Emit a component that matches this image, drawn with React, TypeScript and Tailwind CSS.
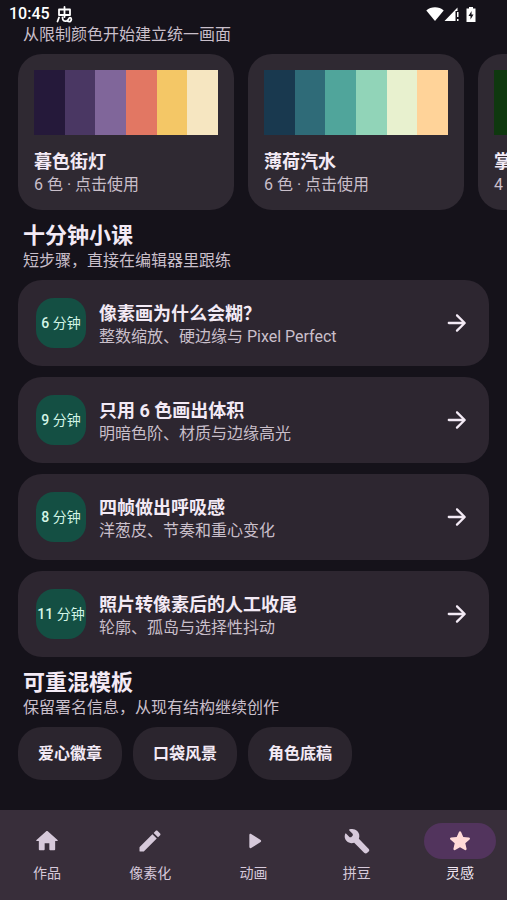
const palettes = [
    { name: '暮色街灯', colors: ['#25193a', '#4a3763', '#80669a', '#e27763', '#f4c766', '#f6e6c1'] },
    { name: '薄荷汽水', colors: ['#19394f', '#2f6b78', '#50a59b', '#91d4b8', '#e8f1cf', '#ffd399'] },
    { name: '掌机绿屏', colors: ['#0f380f', '#306230', '#8bac0f', '#9bbc0f'] },
]

const lessons = [
    { minutes: 6, title: '像素画为什么会糊？', text: '整数缩放、硬边缘与 Pixel Perfect' },
    { minutes: 9, title: '只用 6 色画出体积', text: '明暗色阶、材质与边缘高光' },
    { minutes: 8, title: '四帧做出呼吸感', text: '洋葱皮、节奏和重心变化' },
    { minutes: 11, title: '照片转像素后的人工收尾', text: '轮廓、孤岛与选择性抖动' },
]

const templates = ['爱心徽章', '口袋风景', '角色底稿']

const icons = {
    home: 'M10 19v-5h4v5c0 .55.45 1 1 1h3c.55 0 1-.45 1-1v-7h1.700c.46 0 .68-.57.33-.87L12.67 3.600c-.38-.34-.96-.34-1.340 0l-8.360 7.530c-.34.3-.13.87.33.87H5v7c0 .55.45 1 1 1h3c.55 0 1-.45 1-1z',
    edit: 'M3 17.46v3.04c0 .28.22.5.5.5h3.04c.13 0 .26-.05.35-.15L17.81 9.94l-3.75-3.75L3.15 17.1c-.1.1-.15.22-.15.36zM20.71 7.04c.39-.39.39-1.02 0-1.41l-2.34-2.34c-.39-.39-1.02-.39-1.41 0l-1.83 1.83 3.75 3.75 1.83-1.83z',
    play: 'M8 6.82v10.36c0 .79.87 1.27 1.54.84l8.14-5.18c.62-.39.62-1.29 0-1.69L9.54 5.98C8.87 5.55 8 6.03 8 6.82z',
    build: 'M21.9 18.6l-8.300-8.500c.85-2.300.4-4.900-1.400-6.600C10.500 1.700 7.900 1.200 5.700 2c-.5.2-.6.7-.25 1.050L8.400 6v1.300L7 8.700H5.700L2.800 5.800c-.35-.35-.85-.25-1 .2C1 8.100 1.500 10.500 3.100 12.100c1.750 1.750 4.300 2.200 6.500 1.400l8.500 8.500c.8.8 2 .8 2.700.1l1.200-1.100c.7-.7.7-1.700-.1-2.400z',
    star: 'M12 17.27l4.15 2.51c.76.46 1.69-.22 1.49-1.08l-1.1-4.72 3.67-3.18c.67-.58.31-1.68-.57-1.75l-4.83-.41-1.89-4.46c-.34-.81-1.5-.81-1.84 0L9.19 8.63l-4.83.41c-.88.07-1.24 1.17-.57 1.75l3.67 3.18-1.1 4.72c-.2.86.73 1.54 1.49 1.08L12 17.27z',
    arrow: 'M5 13h11.17l-4.88 4.88c-.39.39-.39 1.03 0 1.42.39.39 1.02.39 1.41 0l6.59-6.59c.39-.39.39-1.02 0-1.41l-6.58-6.6c-.39-.39-1.02-.39-1.41 0-.39.39-.39 1.02 0 1.41L16.17 11H5c-.55 0-1 .45-1 1s.45 1 1 1z',
}

const tabs = [
    { label: '作品', icon: icons.home },
    { label: '像素化', icon: icons.edit },
    { label: '动画', icon: icons.play },
    { label: '拼豆', icon: icons.build },
    { label: '灵感', icon: icons.star, active: true },
]

function Icon({ path }: { path: string }) {
    return (
        <svg className="size-7 shrink-0" viewBox="0 0 24 24" fill="currentColor" aria-hidden="true">
            <path d={path} />
        </svg>
    )
}

function StatusBar() {
    return (
        <header className="flex h-6 items-center px-[9px] pt-1 text-white">
            <span className="text-base font-medium leading-5">10:45</span>
            <svg className="ml-[6px] size-[17px]" viewBox="0 0 17 17" fill="none" stroke="currentColor" strokeWidth="1.800" strokeLinecap="round" strokeLinejoin="round" aria-hidden="true">
                <path d="M3 3.500h11v5.500H3zM8.500 1v10M3 11.500l-1.500 4M6.500 11.500c0 3.500 2 4.300 4.500 3.200 2-.9 1.500-3 3-3s1.800 2.500.5 3.500-2.500.2-3.500-.5" />
            </svg>
            <div className="ml-auto flex items-center pr-[22px]">
                <svg className="h-[14px] w-[18px]" viewBox="0 0 18 14" fill="currentColor" aria-hidden="true">
                    <path d="M9 14 .3 3.400C5 -.8 13 -.8 17.700 3.400z" />
                </svg>
                <svg className="h-[14px] w-4" viewBox="0 0 16 14" fill="currentColor" aria-hidden="true">
                    <path d="M.5 14 13.500.5V4H11.500v10zM13 5h1.500v5H13zM13 12h1.500v2H13z" />
                </svg>
                <svg className="ml-[6px] h-[15px] w-[10px]" viewBox="0 0 10 15" aria-hidden="true">
                    <path fill="currentColor" d="M3 0h4v1.500h2.500V15H.5V1.500H3z" />
                    <path fill="#15121a" d="M5.600 4 2.500 9h2v3.500l3-5h-2z" />
                </svg>
            </div>
        </header>
    )
}

function SectionTitle({ title, text }: { title: string; text: string }) {
    return (
        <div className="mt-3 px-[23px]">
            <h2 className="text-[22px] font-bold leading-7">{title}</h2>
            <p className="text-base leading-[22px] text-[#c9bfca]">{text}</p>
        </div>
    )
}

export default function App() {
    return (
        <div className="flex min-h-screen flex-col overflow-hidden bg-[#15121a] font-[Roboto,'Noto_Sans_CJK_SC',sans-serif] text-[#f3eaf5]">
            <StatusBar />
            <main className="flex-1 pb-[30px]">
                <p className="px-[23px] text-base leading-[22px] text-[#c9bfca]">从限制颜色开始建立统一画面</p>
                <div className="mt-2 flex gap-[14px] overflow-x-auto pl-[18px] [scrollbar-width:none]">
                    {palettes.map((palette) => (
                        <button key={palette.name} type="button" className="w-[216px] shrink-0 rounded-3xl bg-[#2f2932] p-4 pb-[14px] text-left">
                            <div className="flex h-[65px]">
                                {palette.colors.map((color) => (
                                    <span key={color} className="flex-1" style={{ backgroundColor: color }} />
                                ))}
                            </div>
                            <h3 className="mt-[15px] text-lg font-bold leading-6">{palette.name}</h3>
                            <p className="text-base leading-[22px] text-[#c9bfca]">{palette.colors.length} 色 · 点击使用</p>
                        </button>
                    ))}
                </div>

                <SectionTitle title="十分钟小课" text="短步骤，直接在编辑器里跟练" />
                <div className="mt-2 flex flex-col gap-[11px] px-[18px]">
                    {lessons.map((lesson) => (
                        <button key={lesson.title} type="button" className="flex h-[86px] items-center rounded-3xl bg-[#2d2630] px-[18px] text-left">
                            <span className="flex size-[50px] shrink-0 items-center justify-center whitespace-pre rounded-[18px] bg-[#144f43] text-sm text-[#d3f5e6]">
                                <span className="font-medium">{lesson.minutes}</span> 分钟
                            </span>
                            <span className="ml-[13px] flex-1 pt-1">
                                <span className="block text-lg font-bold leading-6">{lesson.title}</span>
                                <span className="block text-base leading-[22px] text-[#c9bfca]">{lesson.text}</span>
                            </span>
                            <Icon path={icons.arrow} />
                        </button>
                    ))}
                </div>

                <SectionTitle title="可重混模板" text="保留署名信息，从现有结构继续创作" />
                <div className="mt-2 flex gap-[11px] px-[18px]">
                    {templates.map((name) => (
                        <button key={name} type="button" className="h-[53px] rounded-3xl bg-[#2b252e] px-5 text-base font-bold">{name}</button>
                    ))}
                </div>
            </main>

            <nav className="flex h-[90px] gap-[9px] bg-[#382e3a] pt-[13px]">
                {tabs.map((tab) => (
                    <a key={tab.label} href="#" className={tab.active ? 'flex flex-1 flex-col items-center text-[#f3eaf5]' : 'flex flex-1 flex-col items-center text-[#d6c9da]'}>
                        <span className={tab.active ? 'flex h-9 w-[72px] items-center justify-center rounded-full bg-[#52345d] text-[#ffdad7]' : 'flex h-9 w-[72px] items-center justify-center'}>
                            <Icon path={tab.icon} />
                        </span>
                        <span className="mt-1 text-sm leading-5">{tab.label}</span>
                    </a>
                ))}
            </nav>
        </div>
    )
}
